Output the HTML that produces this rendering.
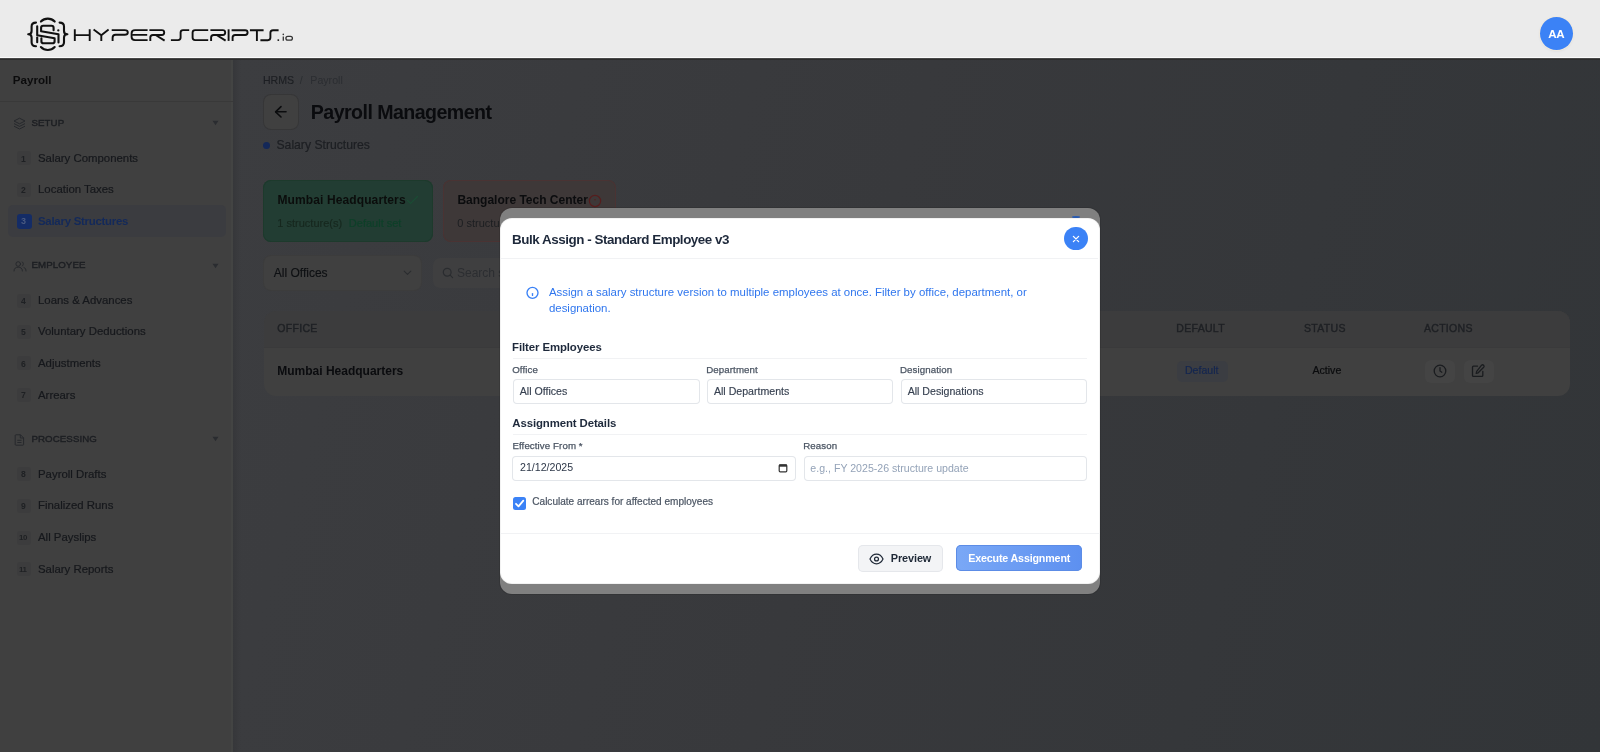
<!DOCTYPE html>
<html><head><meta charset="utf-8">
<style>
*{box-sizing:border-box;margin:0;padding:0}
html,body{width:1600px;height:752px;overflow:hidden;font-family:"Liberation Sans",sans-serif;background:#38393d;position:relative}
.t{position:absolute;white-space:nowrap;line-height:1}
#page{position:absolute;left:0;top:0;width:1600px;height:752px;will-change:transform}
.r{position:absolute;display:block}
#header{position:absolute;left:0;top:0;width:1600px;height:60px;background:#ebebeb;z-index:50;will-change:transform}
#frame{position:absolute;left:500px;top:208px;width:600px;height:386px;background:#808080;border-radius:12px;z-index:30;box-shadow:0 0 0 1px rgba(0,0,0,0.1)}
#modal{position:absolute;left:0;top:0;width:1600px;height:752px;z-index:31;pointer-events:none;will-change:transform}
#mbox{position:absolute;left:500px;top:218px;width:600px;height:366px;background:#fff;border-radius:12px;box-shadow:inset 0 0 0 1px rgba(0,0,0,0.05)}
</style></head>
<body>
<div id="page">
<div class="r" style="left:0px;top:58px;width:233px;height:694px;background:#404040;border-radius:0px;"></div>
<div class="r" style="left:231px;top:58px;width:2px;height:694px;background:#434443;border-radius:0px;"></div>
<div class="r" style="left:233px;top:58px;width:1367px;height:694px;background:linear-gradient(105deg,#3c3d40 0%,#38393c 45%,#323538 100%);border-radius:0px;"></div>
<div class="r" style="left:233px;top:58px;width:8px;height:694px;background:linear-gradient(90deg,#36373a,rgba(56,57,60,0));border-radius:0px;"></div>
<div class="t" style="left:12.80px;top:74.48px;font-size:11.6px;font-weight:700;color:#0b0b0c;letter-spacing:0px;">Payroll</div>
<div class="r" style="left:0px;top:101px;width:233px;height:1px;background:#393939;border-radius:0px;"></div>
<div class="t" style="left:31.42px;top:118.09px;font-size:9.7px;font-weight:400;color:#1c1e22;letter-spacing:0.1px;-webkit-text-stroke:0.4px #1c1e22;">SETUP</div>
<svg class="r" style="left:13px;top:117px" width="13" height="13" viewBox="0 0 13 13"><g fill="none" stroke="#26282c" stroke-width="1" stroke-linejoin="round"><path d="M6.5 1.2 L12 4 L6.5 6.8 L1 4 Z"/><path d="M1 6.6 L6.5 9.4 L12 6.6"/><path d="M1 9.2 L6.5 12 L12 9.2"/></g></svg>
<svg class="r" style="left:212px;top:120.4px" width="7" height="6"><path d="M0.5 0.8 L6.5 0.8 L3.5 5.2 Z" fill="#2a2c30"/></svg>
<div class="t" style="left:31.42px;top:260.39px;font-size:9.7px;font-weight:400;color:#1c1e22;letter-spacing:0.1px;-webkit-text-stroke:0.4px #1c1e22;">EMPLOYEE</div>
<svg class="r" style="left:12.5px;top:261px" width="14" height="11" viewBox="0 0 14 11"><g fill="none" stroke="#26282c" stroke-width="1" stroke-linecap="round"><circle cx="5.2" cy="3" r="2.3"/><path d="M1 10 C1 7.2 2.8 6.2 5.2 6.2 C7.6 6.2 9.4 7.2 9.4 10"/><path d="M9.2 0.9 C10.6 1.3 10.9 4.3 9.2 5"/><path d="M11 6.5 C12.4 7 13 8.2 13 10"/></g></svg>
<svg class="r" style="left:212px;top:262.6px" width="7" height="6"><path d="M0.5 0.8 L6.5 0.8 L3.5 5.2 Z" fill="#2a2c30"/></svg>
<div class="t" style="left:31.42px;top:434.29px;font-size:9.7px;font-weight:400;color:#1c1e22;letter-spacing:0.1px;-webkit-text-stroke:0.4px #1c1e22;">PROCESSING</div>
<svg class="r" style="left:14px;top:433.5px" width="11" height="12" viewBox="0 0 11 12"><g fill="none" stroke="#26282c" stroke-width="1" stroke-linejoin="round"><path d="M1.2 1.5 Q1.2 0.8 2 0.8 H6.5 L9.6 3.9 V10.5 Q9.6 11.2 8.8 11.2 H2 Q1.2 11.2 1.2 10.5 Z"/><path d="M6.3 0.8 V4 H9.6"/><path d="M3.3 6.3 H7.5 M3.3 8.5 H7.5"/></g></svg>
<svg class="r" style="left:212px;top:436.4px" width="7" height="6"><path d="M0.5 0.8 L6.5 0.8 L3.5 5.2 Z" fill="#2a2c30"/></svg>
<div class="r" style="left:17px;top:151px;width:14px;height:14px;background:#3c3c3d;border-radius:3px;"></div>
<div class="t" style="left:21.08px;top:154.52px;font-size:8.6px;font-weight:700;color:#1e2023;letter-spacing:0px;">1</div>
<div class="t" style="left:38.02px;top:152.95px;font-size:11.4px;font-weight:400;color:#16181c;letter-spacing:0px;-webkit-text-stroke:0.2px #16181c;">Salary Components</div>
<div class="r" style="left:17px;top:183px;width:14px;height:14px;background:#3c3c3d;border-radius:3px;"></div>
<div class="t" style="left:21.08px;top:185.92px;font-size:8.6px;font-weight:700;color:#1e2023;letter-spacing:0px;">2</div>
<div class="t" style="left:38.02px;top:184.35px;font-size:11.4px;font-weight:400;color:#16181c;letter-spacing:0px;-webkit-text-stroke:0.2px #16181c;">Location Taxes</div>
<div class="r" style="left:7.5px;top:205px;width:218.5px;height:32px;background:#3b3c40;border-radius:5px;"></div>
<div class="r" style="left:16.5px;top:214px;width:15.0px;height:14.5px;background:#142c66;border-radius:3px;"></div>
<div class="t" style="left:20.96px;top:216.88px;font-size:9px;font-weight:700;color:#4a5a80;letter-spacing:0px;">3</div>
<div class="t" style="left:38.02px;top:216.25px;font-size:11.4px;font-weight:700;color:#13295a;letter-spacing:-0.25px;">Salary Structures</div>
<div class="r" style="left:17px;top:294px;width:14px;height:14px;background:#3c3c3d;border-radius:3px;"></div>
<div class="t" style="left:21.08px;top:296.62px;font-size:8.6px;font-weight:700;color:#1e2023;letter-spacing:0px;">4</div>
<div class="t" style="left:38.02px;top:295.05px;font-size:11.4px;font-weight:400;color:#16181c;letter-spacing:0px;-webkit-text-stroke:0.2px #16181c;">Loans &amp; Advances</div>
<div class="r" style="left:17px;top:325px;width:14px;height:14px;background:#3c3c3d;border-radius:3px;"></div>
<div class="t" style="left:21.08px;top:327.92px;font-size:8.6px;font-weight:700;color:#1e2023;letter-spacing:0px;">5</div>
<div class="t" style="left:38.02px;top:326.35px;font-size:11.4px;font-weight:400;color:#16181c;letter-spacing:0px;-webkit-text-stroke:0.2px #16181c;">Voluntary Deductions</div>
<div class="r" style="left:17px;top:356px;width:14px;height:14px;background:#3c3c3d;border-radius:3px;"></div>
<div class="t" style="left:21.08px;top:359.62px;font-size:8.6px;font-weight:700;color:#1e2023;letter-spacing:0px;">6</div>
<div class="t" style="left:38.02px;top:358.05px;font-size:11.4px;font-weight:400;color:#16181c;letter-spacing:0px;-webkit-text-stroke:0.2px #16181c;">Adjustments</div>
<div class="r" style="left:17px;top:388px;width:14px;height:14px;background:#3c3c3d;border-radius:3px;"></div>
<div class="t" style="left:21.08px;top:391.32px;font-size:8.6px;font-weight:700;color:#1e2023;letter-spacing:0px;">7</div>
<div class="t" style="left:38.02px;top:389.75px;font-size:11.4px;font-weight:400;color:#16181c;letter-spacing:0px;-webkit-text-stroke:0.2px #16181c;">Arrears</div>
<div class="r" style="left:17px;top:467px;width:14px;height:14px;background:#3c3c3d;border-radius:3px;"></div>
<div class="t" style="left:21.08px;top:470.32px;font-size:8.6px;font-weight:700;color:#1e2023;letter-spacing:0px;">8</div>
<div class="t" style="left:38.02px;top:468.75px;font-size:11.4px;font-weight:400;color:#16181c;letter-spacing:0px;-webkit-text-stroke:0.2px #16181c;">Payroll Drafts</div>
<div class="r" style="left:17px;top:499px;width:14px;height:14px;background:#3c3c3d;border-radius:3px;"></div>
<div class="t" style="left:21.08px;top:502.02px;font-size:8.6px;font-weight:700;color:#1e2023;letter-spacing:0px;">9</div>
<div class="t" style="left:38.02px;top:500.45px;font-size:11.4px;font-weight:400;color:#16181c;letter-spacing:0px;-webkit-text-stroke:0.2px #16181c;">Finalized Runs</div>
<div class="r" style="left:17px;top:531px;width:14px;height:14px;background:#3c3c3d;border-radius:3px;"></div>
<div class="t" style="left:18.93px;top:534.31px;font-size:7.9px;font-weight:700;color:#1e2023;letter-spacing:-0.3px;">10</div>
<div class="t" style="left:38.02px;top:532.15px;font-size:11.4px;font-weight:400;color:#16181c;letter-spacing:0px;-webkit-text-stroke:0.2px #16181c;">All Payslips</div>
<div class="r" style="left:17px;top:562px;width:14px;height:14px;background:#3c3c3d;border-radius:3px;"></div>
<div class="t" style="left:18.93px;top:566.01px;font-size:7.9px;font-weight:700;color:#1e2023;letter-spacing:-0.3px;">11</div>
<div class="t" style="left:38.02px;top:563.85px;font-size:11.4px;font-weight:400;color:#16181c;letter-spacing:0px;-webkit-text-stroke:0.2px #16181c;">Salary Reports</div>
<div class="t" style="left:262.96px;top:74.77px;font-size:10.6px;font-weight:400;color:#1d1f23;letter-spacing:0px;-webkit-text-stroke:0.15px #1d1f23;">HRMS</div>
<div class="t" style="left:299.86px;top:74.77px;font-size:10.6px;font-weight:400;color:#2a2c30;letter-spacing:0px;">/</div>
<div class="t" style="left:310.36px;top:74.77px;font-size:10.6px;font-weight:400;color:#2b2d31;letter-spacing:0px;">Payroll</div>
<div class="r" style="left:264px;top:94.5px;width:34px;height:34.5px;background:#404040;border-radius:7px;box-shadow:0 0 0 1px #363637;"></div>
<svg class="r" style="left:273px;top:104px" width="16" height="16" viewBox="0 0 16 16"><g fill="none" stroke="#0b0c0e" stroke-width="1.6" stroke-linecap="round" stroke-linejoin="round"><path d="M8 2.6 L2.6 7.8 L8 13"/><path d="M2.8 7.8 H13"/></g></svg>
<div class="t" style="left:310.82px;top:102.80px;font-size:19.6px;font-weight:700;color:#0a0b0e;letter-spacing:-0.55px;">Payroll Management</div>
<div class="r" style="left:263px;top:141.6px;width:7px;height:7px;border-radius:50%;background:#142858"></div>
<div class="t" style="left:276.47px;top:139.07px;font-size:12.2px;font-weight:400;color:#1d1f23;letter-spacing:0px;-webkit-text-stroke:0.2px #1d1f23;">Salary Structures</div>
<div class="r" style="left:263px;top:180px;width:170px;height:62px;background:#223d33;border-radius:8px;box-shadow:inset 0 0 0 1px #1d3a2c;"></div>
<div class="t" style="left:277.38px;top:194.24px;font-size:12px;font-weight:700;color:#0b0d0c;letter-spacing:0.12px;">Mumbai Headquarters</div>
<svg class="r" style="left:406px;top:195px" width="13" height="10" viewBox="0 0 13 10"><path d="M1.5 5.3 L4.6 8.3 L11.5 1.5" fill="none" stroke="#1b4d35" stroke-width="1.15" stroke-linecap="round" stroke-linejoin="round"/></svg>
<div class="t" style="left:277.34px;top:217.69px;font-size:11px;font-weight:400;color:#17281f;letter-spacing:0px;-webkit-text-stroke:0.15px #17281f;">1 structure(s)</div>
<div class="t" style="left:348.84px;top:217.69px;font-size:11px;font-weight:400;color:#0e4029;letter-spacing:0px;-webkit-text-stroke:0.2px #0e4029;">Default set</div>
<div class="r" style="left:443px;top:180px;width:173px;height:62px;background:#3e3838;border-radius:8px;box-shadow:inset 0 0 0 1px #4a3333;"></div>
<div class="t" style="left:457.38px;top:193.84px;font-size:12px;font-weight:700;color:#0b0c0e;letter-spacing:0px;">Bangalore Tech Center</div>
<svg class="r" style="left:588px;top:193.5px" width="14" height="14" viewBox="0 0 14 14"><circle cx="7" cy="7" r="5.6" fill="none" stroke="#561d1d" stroke-width="1.2"/><circle cx="7" cy="5.8" r="0.8" fill="#561d1d"/></svg>
<div class="t" style="left:457.34px;top:217.69px;font-size:11px;font-weight:400;color:#1c1e21;letter-spacing:0px;">0 structures</div>
<div class="r" style="left:264px;top:256px;width:157px;height:33.5px;background:#404040;border-radius:7px;box-shadow:0 0 0 1px #3c3c3c;"></div>
<div class="t" style="left:273.78px;top:266.84px;font-size:12px;font-weight:400;color:#0e1013;letter-spacing:0px;-webkit-text-stroke:0.15px #0e1013;">All Offices</div>
<svg class="r" style="left:402px;top:269px" width="11" height="8" viewBox="0 0 11 8"><path d="M2.2 2.2 L5.5 5.3 L8.8 2.2" fill="none" stroke="#2a2c2f" stroke-width="1.1" stroke-linecap="round" stroke-linejoin="round"/></svg>
<div class="r" style="left:433px;top:258px;width:207px;height:29.5px;background:#3f3f40;border-radius:7px;"></div>
<svg class="r" style="left:442px;top:267px" width="12" height="12" viewBox="0 0 12 12"><g fill="none" stroke="#2a2c2f" stroke-width="1.2" stroke-linecap="round"><circle cx="5.2" cy="5.2" r="3.9"/><path d="M8.1 8.1 L10.6 10.6"/></g></svg>
<div class="t" style="left:456.98px;top:266.84px;font-size:12px;font-weight:400;color:#2c2e31;letter-spacing:0px;">Search structures...</div>
<div class="r" style="left:264px;top:310.5px;width:1305.5px;height:85.0px;background:#404040;border-radius:12px;overflow:hidden;"></div>
<div class="r" style="left:264px;top:310.5px;width:1305.5px;height:36.0px;background:#3c3c3d;border-radius:0px;border-radius:12px 12px 0 0;"></div>
<div class="r" style="left:264px;top:346.5px;width:1305.5px;height:1.0px;background:#3a3a3b;border-radius:0px;"></div>
<div class="t" style="left:277.37px;top:323.11px;font-size:10.5px;font-weight:400;color:#1e2024;letter-spacing:0.3px;-webkit-text-stroke:0.4px #1e2024;">OFFICE</div>
<div class="t" style="left:1176.37px;top:323.11px;font-size:10.5px;font-weight:400;color:#1e2024;letter-spacing:0.3px;-webkit-text-stroke:0.4px #1e2024;">DEFAULT</div>
<div class="t" style="left:1304.07px;top:323.11px;font-size:10.5px;font-weight:400;color:#1e2024;letter-spacing:0.3px;-webkit-text-stroke:0.4px #1e2024;">STATUS</div>
<div class="t" style="left:1423.97px;top:323.11px;font-size:10.5px;font-weight:400;color:#1e2024;letter-spacing:0.3px;-webkit-text-stroke:0.4px #1e2024;">ACTIONS</div>
<div class="t" style="left:277.28px;top:365.14px;font-size:12px;font-weight:700;color:#0a0b0e;letter-spacing:0px;">Mumbai Headquarters</div>
<div class="r" style="left:1177px;top:360.5px;width:51px;height:21.0px;background:#3b3d42;border-radius:5px;"></div>
<div class="t" style="left:1184.96px;top:365.22px;font-size:10.6px;font-weight:400;color:#142650;letter-spacing:0px;-webkit-text-stroke:0.2px #142650;">Default</div>
<div class="t" style="left:1312.46px;top:365.22px;font-size:10.6px;font-weight:400;color:#0a0b0d;letter-spacing:0px;-webkit-text-stroke:0.2px #0a0b0d;">Active</div>
<div class="r" style="left:1424.5px;top:359.5px;width:30.5px;height:23.5px;background:#444444;border-radius:6px;"></div>
<div class="r" style="left:1463.5px;top:359.5px;width:30.0px;height:23.5px;background:#444444;border-radius:6px;"></div>
<svg class="r" style="left:1432px;top:363px" width="16" height="16" viewBox="0 0 16 16"><g fill="none" stroke="#1a1c1f" stroke-width="1.3" stroke-linecap="round"><circle cx="8" cy="8" r="5.8"/><path d="M8 4.6 V8 L9.8 9.2"/></g></svg>
<svg class="r" style="left:1470px;top:363px" width="16" height="16" viewBox="0 0 16 16"><g fill="none" stroke="#1a1c1f" stroke-width="1.3" stroke-linecap="round" stroke-linejoin="round"><path d="M7.5 3.2 H3.5 Q2.5 3.2 2.5 4.2 V12.5 Q2.5 13.4 3.5 13.4 H11.8 Q12.8 13.4 12.8 12.5 V8.5"/><path d="M11.6 2.2 Q12.6 1.3 13.6 2.3 Q14.6 3.3 13.7 4.3 L8.2 9.8 L6.2 10.3 L6.7 8.3 Z"/></g></svg>
</div>
<div id="header">
<div class="r" style="left:0;top:56.5px;width:1600px;height:1.5px;background:#fafafa"></div>
<div class="r" style="left:0;top:58px;width:1600px;height:2px;background:linear-gradient(#555,#1e1e1e)"></div>
<svg class="r" style="left:0;top:0" width="300" height="58" viewBox="0 0 300 58">
<g fill="none" stroke="#111" stroke-width="2.1" stroke-linecap="round" stroke-linejoin="round">
<path d="M36 22.6 C33 22.6 31.6 23.5 31.6 26.5 L31.6 31 C31.6 33.2 30 34.3 28.2 34.3 C30 34.3 31.6 35.4 31.6 37.6 L31.6 42.2 C31.6 45 33 46.2 36 46.2"/>
<path d="M59.6 22.6 C62.6 22.6 64 23.5 64 26.5 L64 31 C64 33.2 65.6 34.3 67.4 34.3 C65.6 34.3 64 35.4 64 37.6 L64 42.2 C64 45 62.6 46.2 59.6 46.2"/>
<path d="M40.9 21.6 A9.6 9.6 0 0 1 54.7 21.6"/>
<path d="M40.9 47.1 A9.6 9.6 0 0 0 54.7 47.1"/>
<path d="M37.2 26.3 V35.2 L54.6 38.2 V41.2 Q54.6 43.3 52.5 43.3 H43.5 Q41.4 43.3 41.4 41.2 V38.3"/>
<path d="M37.2 37.6 V42.3"/>
<path d="M53.6 30.2 V27.8 Q53.6 25.8 51.5 25.8 H43.2 Q41.1 25.8 41.1 27.8 V31.2 L58.5 34.2 V42.4"/>
</g>
<circle cx="58.3" cy="30.4" r="1.15" fill="#111"/>
<g fill="none" stroke="#111" stroke-width="1.9" stroke-linecap="butt" stroke-linejoin="round">
<path d="M74.8 29.3 V40.9 M89.7 29.3 V40.9 M74.8 35.1 H89.7"/>
<path d="M93.6 29.6 L101.3 35.3 L108.6 29.6 M101.3 35.3 V40.9"/>
<path d="M111.7 30.1 H124.6 C126.9 30.1 127.8 31.2 127.8 32.45 C127.8 33.7 126.9 34.8 124.6 34.8 H115.6 Q112.6 34.8 112.6 37.8 V40.9"/>
<path d="M147.6 30.1 H135 C132.6 30.1 131.6 31.4 131.6 33.2 V37 C131.6 38.8 132.6 40.1 135 40.1 H147.6 M132.6 34.9 H147.2"/>
<path d="M150.3 40.9 V37.6 Q150.3 35 152.9 35 H161.8 Q164.2 35 164.2 32.5 Q164.2 30.1 161.8 30.1 H149.4 M155.6 35 L164.6 40.6"/>
<path d="M189.2 30.1 H183 Q180.6 30.1 180.6 32.6 V37.6 Q180.6 40.1 178 40.1 H170.9"/>
<path d="M208.2 30.1 H195.1 Q192.6 30.1 192.6 32.6 V37.6 Q192.6 40.1 195.1 40.1 H208.2"/>
<path d="M211.1 40.9 V37.6 Q211.1 35 213.7 35 H222.8 Q225.2 35 225.2 32.5 Q225.2 30.1 222.8 30.1 H210.4 M216.6 35 L225.6 40.6"/>
<path d="M228.6 29.3 V40.9"/>
<path d="M232.6 40.9 V37.6 Q232.6 35 235.2 35 H245.2 Q247.6 35 247.6 32.6 Q247.6 30.2 245.2 30.2 H231.6"/>
<path d="M249.9 30.2 H263.6 M256.9 30.2 V40.9"/>
<path d="M278.6 30.2 H273 Q270.4 30.2 270.4 32.8 V37.6 Q270.4 40.2 267.8 40.2 H260.4"/>
</g>
<circle cx="278.3" cy="40.1" r="0.95" fill="#111"/>
<circle cx="283.3" cy="34.4" r="0.8" fill="#333"/>
<path d="M283.3 36.5 V40.7" stroke="#333" stroke-width="1.3"/>
<rect x="285.9" y="36.4" width="6.5" height="3.8" rx="1.9" fill="none" stroke="#333" stroke-width="1.3"/>
</svg>
<div class="r" style="left:1540px;top:16.8px;width:33.2px;height:33.2px;border-radius:50%;background:#3b82f6;box-shadow:0 0 0 1px #efe9df, 0 1px 3px rgba(0,0,0,0.08)"></div>
<div class="t" style="left:1548.3px;top:28.4px;font-size:11.6px;font-weight:700;color:#fff;letter-spacing:-0.5px">AA</div>
</div>
<div id="frame"></div>
<div id="modal">
<div class="r" style="left:1072.2px;top:216px;width:7.4px;height:2.2px;border-radius:50%;background:#2a5bb0"></div>
<div id="mbox"></div>
<div class="t" style="left:512.00px;top:232.85px;font-size:13.4px;font-weight:700;color:#1e293b;letter-spacing:-0.45px;">Bulk Assign - Standard Employee v3</div>
<div class="r" style="left:1064.2px;top:227px;width:23.4px;height:23.2px;border-radius:50%;background:#3b82f6"></div>
<svg class="r" style="left:1070px;top:232.5px" width="12" height="12" viewBox="0 0 12 12"><path d="M3.4 3.4 L8.6 8.6 M8.6 3.4 L3.4 8.6" stroke="#fff" stroke-width="1.3" stroke-linecap="round"/></svg>
<div class="r" style="left:500px;top:258px;width:598px;height:1px;background:#f1f2f4;border-radius:0px;"></div>
<svg class="r" style="left:525px;top:285.5px" width="15" height="15" viewBox="0 0 15 15"><g fill="none" stroke="#3b82f6" stroke-width="1.35" stroke-linecap="round"><circle cx="7.5" cy="6.8" r="5.5"/><path d="M7.5 7.6 V9.4"/></g></svg>
<div class="t" style="left:548.91px;top:286.81px;font-size:11.45px;font-weight:400;color:#2f76ee;letter-spacing:0px;">Assign a salary structure version to multiple employees at once. Filter by office, department, or</div>
<div class="t" style="left:548.91px;top:303.31px;font-size:11.45px;font-weight:400;color:#2f76ee;letter-spacing:0px;">designation.</div>
<div class="t" style="left:512.12px;top:341.65px;font-size:11.4px;font-weight:700;color:#1e293b;letter-spacing:-0.1px;">Filter Employees</div>
<div class="r" style="left:512.6px;top:358px;width:574.4px;height:1px;background:#f1f2f4;border-radius:0px;"></div>
<div class="t" style="left:512.22px;top:365.49px;font-size:9.7px;font-weight:400;color:#4b5563;letter-spacing:0.1px;font-weight:400;-webkit-text-stroke:0.25px #4b5563;">Office</div>
<div class="t" style="left:706.22px;top:365.49px;font-size:9.7px;font-weight:400;color:#4b5563;letter-spacing:0.1px;-webkit-text-stroke:0.25px #4b5563;">Department</div>
<div class="t" style="left:899.92px;top:365.49px;font-size:9.7px;font-weight:400;color:#4b5563;letter-spacing:0.1px;-webkit-text-stroke:0.25px #4b5563;">Designation</div>
<div class="r" style="left:512.6px;top:379.2px;width:187.0px;height:24.80000000000001px;background:#fff;border-radius:4px;box-shadow:inset 0 0 0 1px #e3e6ea;"></div>
<div class="t" style="left:519.76px;top:386.42px;font-size:10.6px;font-weight:400;color:#374151;letter-spacing:0px;-webkit-text-stroke:0.15px #374151;">All Offices</div>
<div class="r" style="left:706.8px;top:379.2px;width:186.20000000000005px;height:24.80000000000001px;background:#fff;border-radius:4px;box-shadow:inset 0 0 0 1px #e3e6ea;"></div>
<div class="t" style="left:713.96px;top:386.42px;font-size:10.6px;font-weight:400;color:#374151;letter-spacing:0px;-webkit-text-stroke:0.15px #374151;">All Departments</div>
<div class="r" style="left:900.5px;top:379.2px;width:186.5px;height:24.80000000000001px;background:#fff;border-radius:4px;box-shadow:inset 0 0 0 1px #e3e6ea;"></div>
<div class="t" style="left:907.66px;top:386.42px;font-size:10.6px;font-weight:400;color:#374151;letter-spacing:0px;-webkit-text-stroke:0.15px #374151;">All Designations</div>
<div class="t" style="left:512.32px;top:417.85px;font-size:11.4px;font-weight:700;color:#1e293b;letter-spacing:-0.1px;">Assignment Details</div>
<div class="r" style="left:512.6px;top:434px;width:574.4px;height:1px;background:#f1f2f4;border-radius:0px;"></div>
<div class="t" style="left:512.42px;top:441.19px;font-size:9.7px;font-weight:400;color:#4b5563;letter-spacing:0.1px;-webkit-text-stroke:0.25px #4b5563;">Effective From *</div>
<div class="t" style="left:803.22px;top:441.29px;font-size:9.7px;font-weight:400;color:#4b5563;letter-spacing:0.1px;-webkit-text-stroke:0.25px #4b5563;">Reason</div>
<div class="r" style="left:512.4px;top:456.3px;width:284.1px;height:24.30000000000001px;background:#fff;border-radius:4px;box-shadow:inset 0 0 0 1px #e3e6ea;"></div>
<div class="t" style="left:520.06px;top:462.22px;font-size:10.6px;font-weight:400;color:#2d3748;letter-spacing:0px;">21/12/2025</div>
<svg class="r" style="left:777.5px;top:462.5px" width="10" height="10" viewBox="0 0 10 10"><rect x="1.2" y="1.8" width="7.6" height="7" rx="1" fill="none" stroke="#333" stroke-width="1.2"/><rect x="1" y="1.5" width="8" height="2.2" fill="#333"/></svg>
<div class="r" style="left:803.5px;top:456.3px;width:283.5px;height:24.399999999999977px;background:#fff;border-radius:4px;box-shadow:inset 0 0 0 1px #e3e6ea;"></div>
<div class="t" style="left:810.36px;top:463.02px;font-size:10.6px;font-weight:400;color:#94a3b8;letter-spacing:0px;">e.g., FY 2025-26 structure update</div>
<div class="r" style="left:512.6px;top:497px;width:13.299999999999955px;height:13px;background:#3b82f6;border-radius:2.5px;"></div>
<svg class="r" style="left:512.6px;top:497px" width="13.3" height="13" viewBox="0 0 13.3 13"><path d="M3 6.8 L5.5 9.3 L10.3 3.6" fill="none" stroke="#fff" stroke-width="1.8" stroke-linecap="round" stroke-linejoin="round"/></svg>
<div class="t" style="left:532.30px;top:497.29px;font-size:10.05px;font-weight:400;color:#4b5563;letter-spacing:0px;-webkit-text-stroke:0.2px #4b5563;">Calculate arrears for affected employees</div>
<div class="r" style="left:500px;top:533px;width:600px;height:1px;background:#f1f2f4;border-radius:0px;"></div>
<div class="r" style="left:857.5px;top:544.5px;width:85.0px;height:27.200000000000045px;background:#f3f4f6;border-radius:5px;box-shadow:inset 0 0 0 1px #e5e7eb;"></div>
<svg class="r" style="left:869px;top:551.5px" width="15" height="14" viewBox="0 0 15 14"><g fill="none" stroke="#1f2937" stroke-width="1.25"><path d="M1 7 C2.5 3.8 4.8 2.2 7.5 2.2 C10.2 2.2 12.5 3.8 14 7 C12.5 10.2 10.2 11.8 7.5 11.8 C4.8 11.8 2.5 10.2 1 7 Z" stroke-linejoin="round"/><circle cx="7.5" cy="7" r="1.95"/></g></svg>
<div class="t" style="left:890.75px;top:552.67px;font-size:10.9px;font-weight:700;color:#1f2937;letter-spacing:-0.1px;">Preview</div>
<div class="r" style="left:956.2px;top:544.7px;width:126.09999999999991px;height:26.699999999999932px;background:linear-gradient(90deg,#7aa8f6,#5d90f0);border-radius:5px;box-shadow:inset 0 0 0 1px #5c8ce6;"></div>
<div class="t" style="left:968.16px;top:552.84px;font-size:10.7px;font-weight:700;color:#ffffff;letter-spacing:-0.15px;">Execute Assignment</div>
</div>
</body></html>
